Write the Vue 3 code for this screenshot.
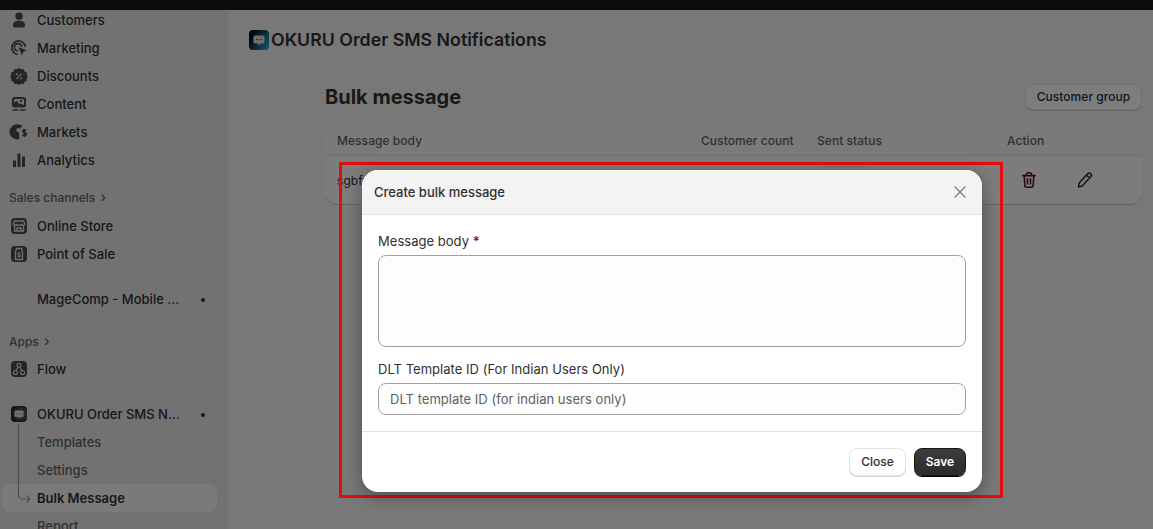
<script setup>
const icons = {
  customers: { fill: 'M10 2.500a3.700 3.700 0 1 1 0 7.400 3.700 3.700 0 0 1 0-7.400ZM4 15c0-3 2.600-4.300 6-4.300s6 1.300 6 4.300v1a1.400 1.400 0 0 1-1.400 1.400H5.400A1.400 1.400 0 0 1 4 16v-1Z' },
  marketing: { stroke: 'M8.600 16.400a6.800 6.800 0 1 1 7.800-7.500M8.800 12.800a3.600 3.600 0 1 1 3.800-3.700', fill: 'M9.400 9.200l8.400 3-3.400 1.500-1.500 3.700-3.500-8.200Z' },
  discounts: { fill: 'M10 2l2.100 1.300 2.500-.2 1 2.300 2.300 1-.2 2.500L19 10.500l-1.300 2.100.2 2.100-2.300 1-1 2.200-2.500-.2L10 19l-2.100-1.300-2.500.2-1-2.200-2.300-1 .2-2.100L1 10.500l1.300-1.600-.2-2.500 2.300-1 1-2.300 2.500.2L10 2Zm-2.100 5.200a1 1 0 1 0 0 2 1 1 0 0 0 0-2Zm4.200 4a1 1 0 1 0 0 2 1 1 0 0 0 0-2ZM12.200 7.300 7 12.800l.8.700L13 8l-.8-.7Z' },
  content: { fill: 'M5.500 3h9A2.500 2.500 0 0 1 17 5.500v5.500a2.500 2.500 0 0 1-2.500 2.500h-9A2.500 2.500 0 0 1 3 11V5.500A2.500 2.500 0 0 1 5.500 3Zm.5 2a1 1 0 0 0-1 1v2.800L7.500 6.800 11 10.500l1-1 2.500 1.500a.500.500 0 0 0 .5-.500V6a1 1 0 0 0-1-1H6Zm6 .800a1.200 1.200 0 1 1 0 2.400 1.200 1.200 0 0 1 0-2.400ZM3.500 15.200h5.800v1.500H3.500v-1.500Zm7.200 0h5.800v1.500h-5.800v-1.500Z' },
  markets: { fill: 'M9.500 2.500a7.500 7.500 0 0 1 4 1.100L11 6.500 8.500 6 7 8l2 2.500 1-.5v2.500l.5 4.400a7.500 7.500 0 1 1-1-14.400Z', stroke: 'M17 8.500c-.5-.8-3.300-1-3.300.7 0 1.800 3.600 1 3.600 2.900 0 1.700-3 1.600-3.800.6M15.400 7v8' },
  analytics: { fill: 'M4.500 10.500h2A.500.500 0 0 1 7 11v6H4v-6a.500.500 0 0 1 .5-.5ZM9 3.500h2a.500.500 0 0 1 .5.500v13h-3V4a.500.500 0 0 1 .5-.5Zm4.500 3h2a.500.500 0 0 1 .5.500v10h-3V7a.500.500 0 0 1 .5-.5Z' },
  store: 'M5.500 9.500v5.500h9V9.500M5.500 5h9l1.300 3c-.5 1.800-2.900 1.800-3.300 0-.4 1.800-4.600 1.800-5 0-.4 1.800-2.800 1.800-3.300 0L5.500 5ZM8 15v-3h4v3',
  pos: 'M6.500 8l1-3.500h5l1 3.500v7.500h-7V8ZM11.300 9.300c-.5-.6-2.300-.6-2.300.6 0 1.300 2.400.7 2.400 2 0 1.200-2 1.100-2.600.5',
  flow: 'M12 6.300a2 2 0 1 1-4 0 2 2 0 0 1 4 0ZM8.400 13.500a2 2 0 1 1-4 0 2 2 0 0 1 4 0ZM15.600 13.500a2 2 0 1 1-4 0 2 2 0 0 1 4 0ZM9 8l-2 3.700M11 8l2 3.700',
}

const nav = [
  { label: 'Customers', icon: 'customers' },
  { label: 'Marketing', icon: 'marketing' },
  { label: 'Discounts', icon: 'discounts' },
  { label: 'Content', icon: 'content' },
  { label: 'Markets', icon: 'markets' },
  { label: 'Analytics', icon: 'analytics' },
]
const channels = [
  { label: 'Online Store', icon: 'store' },
  { label: 'Point of Sale', icon: 'pos' },
]
const subLinks = ['Templates', 'Settings']
</script>

<template>
  <div class="screen">
    <div class="topbar"></div>
    <div class="shell">
      <aside class="sidebar">
        <div class="nav-list">
          <a v-for="item in nav" :key="item.label" class="nav-row">
            <span class="nav-icon">
              <svg viewBox="0 0 20 20" width="20" height="20">
                <path v-if="icons[item.icon].fill" :d="icons[item.icon].fill" fill="#4a4a4a" fill-rule="evenodd" />
                <path v-if="icons[item.icon].stroke" :d="icons[item.icon].stroke" fill="none" stroke="#4a4a4a" stroke-width="1.700" />
              </svg>
            </span>
            <span class="nav-label">{{ item.label }}</span>
          </a>
        </div>

        <div class="section-title section-channels">Sales channels <span class="chev">›</span></div>
        <a v-for="item in channels" :key="item.label" class="nav-row">
          <span class="nav-icon">
            <svg viewBox="0 0 20 20" width="20" height="20">
              <rect x="2" y="2" width="16" height="16" rx="4" fill="#4a4a4a" />
              <path :d="icons[item.icon]" fill="none" stroke="#e0e0e0" stroke-width="1.300" />
            </svg>
          </span>
          <span class="nav-label">{{ item.label }}</span>
        </a>

        <div class="rule rule-one"></div>
        <a class="nav-row">
          <span class="nav-icon"></span>
          <span class="nav-label">MageComp - Mobile ...</span>
          <span class="dot"></span>
        </a>

        <div class="section-title section-apps">Apps <span class="chev">›</span></div>
        <a class="nav-row">
          <span class="nav-icon">
            <svg viewBox="0 0 20 20" width="20" height="20">
              <rect x="2" y="2" width="16" height="16" rx="4" fill="#4a4a4a" />
              <path :d="icons.flow" fill="none" stroke="#e8e8e8" stroke-width="1.100" />
            </svg>
          </span>
          <span class="nav-label">Flow</span>
        </a>
        <div class="rule rule-two"></div>

        <div class="app-group">
          <a class="nav-row">
            <span class="nav-icon">
              <svg viewBox="0 0 20 20" width="20" height="20">
                <defs>
                  <radialGradient id="navLogo" cx="0.600" cy="0.500" r="0.700">
                    <stop offset="0" stop-color="#7a7a7a" />
                    <stop offset="1" stop-color="#161616" />
                  </radialGradient>
                </defs>
                <rect x="2" y="2" width="16" height="16" rx="4" fill="url(#navLogo)" />
                <path d="M6.500 6.500h7a1 1 0 0 1 1 1v4.500a1 1 0 0 1-1 1h-2.500L10 14.500 9 13H6.500a1 1 0 0 1-1-1V7.500a1 1 0 0 1 1-1Z" fill="#e4e4e4" />
                <path d="M7.500 10h5" stroke="#666" stroke-width="1" stroke-dasharray="1 1" />
              </svg>
            </span>
            <span class="nav-label">OKURU Order SMS N...</span>
            <span class="dot"></span>
          </a>
          <a v-for="link in subLinks" :key="link" class="nav-row sub-row">
            <span class="nav-icon"></span>
            <span class="nav-label">{{ link }}</span>
          </a>
          <a class="nav-row sub-row active-row">
            <span class="nav-icon"></span>
            <span class="nav-label">Bulk Message</span>
          </a>
          <a class="nav-row sub-row">
            <span class="nav-icon"></span>
            <span class="nav-label">Report</span>
          </a>
          <svg class="tree" width="24" height="84" viewBox="0 0 24 84">
            <path d="M9.500 0V71a4 4 0 0 0 4 4H21M17.500 71.500 21 75l-3.500 3.500" fill="none" stroke="#9a9a9a" stroke-width="1.200" />
          </svg>
        </div>
      </aside>

      <main class="main">
        <header class="app-title">
          <svg viewBox="0 0 20 20" width="20" height="20" class="app-logo">
            <defs>
              <linearGradient id="logoGrad" x1="0" y1="0" x2="1" y2="0.600">
                <stop offset="0.250" stop-color="#0a1216" />
                <stop offset="1" stop-color="#1a9cc0" />
              </linearGradient>
            </defs>
            <rect width="20" height="20" rx="4" fill="url(#logoGrad)" />
            <path d="M6 5.500h8A1.500 1.500 0 0 1 15.500 7v5a1.500 1.500 0 0 1-1.500 1.500h-2.500L10 15.500l-1.500-2H6A1.500 1.500 0 0 1 4.500 12V7A1.500 1.500 0 0 1 6 5.500Z" fill="#dcdcdc" />
            <path d="M7 9.500h6" stroke="#555" stroke-width="1.200" stroke-dasharray="1.200 1.200" />
          </svg>
          <h1>OKURU Order SMS Notifications</h1>
        </header>

        <section class="content">
          <div class="content-head">
            <h2>Bulk message</h2>
            <button class="ghost-btn">Customer group</button>
          </div>

          <div class="table-card">
            <div class="table-row table-head">
              <span>Message body</span>
              <span>Customer count</span>
              <span>Sent status</span>
              <span>Action</span>
            </div>
            <div class="table-row table-body">
              <span>sgbfdg</span>
              <span>12</span>
              <span><i class="badge">Sent</i></span>
              <span class="actions">
                <svg viewBox="0 0 20 20" width="20" height="20">
                  <path d="M3.800 5.600h12.400M7.500 5.600V4.300A1.500 1.500 0 0 1 9 2.800h2a1.500 1.500 0 0 1 1.500 1.500v1.300M5.200 5.600l.6 10a1.800 1.800 0 0 0 1.800 1.700h4.800a1.800 1.800 0 0 0 1.800-1.700l.6-10M8.500 8.700v5.200M11.500 8.700v5.200" fill="none" stroke="#5e0f1e" stroke-width="1.600" stroke-linecap="round" />
                </svg>
                <svg viewBox="0 0 20 20" width="20" height="20">
                  <path d="M3.500 17l.6-4 8.600-9.300a2 2 0 0 1 2.900 0l.2.200a2 2 0 0 1 0 2.800l-8.600 9.300-3.700 1ZM11.500 5.200l3.400 3.200" fill="none" stroke="#2a2a2a" stroke-width="1.500" stroke-linejoin="round" />
                </svg>
              </span>
            </div>
          </div>
        </section>
      </main>
    </div>

    <div class="backdrop"></div>
    <div class="annotation"></div>

    <div class="modal">
      <div class="modal-head">
        <h3>Create bulk message</h3>
        <svg viewBox="0 0 12 12" width="12" height="12" class="modal-x">
          <path d="M.5.500l11 11M11.500.500l-11 11" stroke="#7c7c7c" stroke-width="1.300" fill="none" />
        </svg>
      </div>
      <div class="modal-body">
        <label class="field-label">Message body <em>*</em></label>
        <div class="text-box text-area"></div>
        <label class="field-label second">DLT Template ID (For Indian Users Only)</label>
        <div class="text-box text-input">DLT template ID (for indian users only)</div>
      </div>
      <div class="modal-foot">
        <button class="btn-close">Close</button>
        <button class="btn-save">Save</button>
      </div>
    </div>
  </div>
</template>

<style>
html, body { margin: 0; overflow: hidden; }
</style>

<style scoped>
.screen {
  position: relative;
  width: 1153px;
  height: 529px;
  overflow: hidden;
  background: #f1f1f1;
  color: #303030;
  font-family: Inter, "Liberation Sans", sans-serif;
  font-size: 13px;
}
.topbar { height: 10px; background: #1a1a1a; }
.shell { display: flex; height: 519px; }

.sidebar {
  flex: 0 0 228px;
  box-sizing: border-box;
  height: 519px;
  overflow: hidden;
  background: #e5e5e5;
}
.nav-list { margin-top: -4px; }
.nav-row {
  position: relative;
  display: flex;
  align-items: center;
  gap: 8px;
  height: 28px;
  padding-left: 9px;
  font-weight: 450;
  color: #303030;
}
.nav-icon { flex: 0 0 20px; height: 20px; display: flex; }
.nav-label { white-space: nowrap; }
.dot {
  position: absolute;
  left: 201px;
  top: 13px;
  width: 4px;
  height: 4px;
  border-radius: 50%;
  background: #303030;
}
.section-title {
  height: 20px;
  line-height: 20px;
  padding-left: 9px;
  font-size: 12px;
  font-weight: 450;
  color: #616161;
}
.section-channels { margin: 13px 0 5px; }
.section-apps { margin: 18px 0 4px; }
.chev { margin-left: 2px; font-size: 14px; }
.rule { height: 1px; margin: 8px; background: #dedede; }
.app-group { position: relative; }
.sub-row { color: #616161; }
.active-row {
  margin: 0 11px 0 2px;
  padding-left: 7px;
  border-radius: 8px;
  background: #f4f4f4;
  color: #303030;
  font-weight: 600;
}
.tree { position: absolute; left: 9px; top: 24px; }

.main { flex: 1; min-width: 0; padding: 20px 11px 0 21px; }
.app-title { display: flex; align-items: center; gap: 2px; height: 20px; }
.app-title h1 {
  margin: 0 0 2px;
  font-size: 17.75px;
  font-weight: 600;
  color: #303030;
  white-space: nowrap;
}
.app-logo { flex: none; }

.content { margin: 0 0 0 76px; padding-top: 34px; }
.content-head { display: flex; align-items: center; justify-content: space-between; height: 26px; }
.content-head h2 { margin: 0; font-size: 20px; font-weight: 700; color: #303030; }
.ghost-btn {
  height: 26px;
  width: 117px;
  padding: 0 0 2px;
  border: 0;
  border-radius: 8px;
  background: #fafafa;
  box-shadow: 0 1px 0 #c8c8c8, inset 0 0 0 1px #e3e3e3;
  font: 450 12px Inter, sans-serif;
  letter-spacing: 0.05px;
  color: #303030;
}
.table-card {
  margin-top: 17px;
  border-radius: 12px;
  overflow: hidden;
  background: #f9f9f9;
  box-shadow: 0 1px 0 #c8c8c8;
}
.table-row {
  display: grid;
  grid-template-columns: 364px 116px 190px 1fr;
  align-items: center;
  padding-left: 12px;
  font-size: 12px;
  font-weight: 450;
  letter-spacing: 0.05px;
}
.table-head {
  box-sizing: border-box;
  height: 29px;
  padding-bottom: 2px;
  background: #f5f5f5;
  border-bottom: 1px solid #e0e0e0;
  color: #616161;
}
.table-body { height: 48px; color: #303030; font-weight: 400; }
.badge {
  display: block;
  width: 52px;
  height: 28px;
  border-radius: 8px;
  border: 1px solid #e3e3e3;
  box-sizing: border-box;
  font-style: normal;
  text-align: center;
}
.actions { display: flex; gap: 36px; margin-left: 12px; }

.backdrop { position: absolute; inset: 0; background: rgba(0, 0, 0, 0.5); }
.annotation {
  position: absolute;
  left: 339px;
  top: 162px;
  width: 664px;
  height: 336px;
  box-sizing: border-box;
  border: 3px solid #e30b0b;
}

.modal {
  position: absolute;
  left: 362px;
  top: 170px;
  width: 620px;
  height: 322px;
  border-radius: 16px;
  overflow: hidden;
  background: #fff;
  box-shadow: 0 4px 16px rgba(0, 0, 0, 0.35);
  display: flex;
  flex-direction: column;
}
.modal-head {
  flex: 0 0 44px;
  display: flex;
  align-items: center;
  justify-content: space-between;
  padding: 0 16px 0 12px;
  background: #f3f3f3;
  border-bottom: 1px solid #e3e3e3;
}
.modal-head h3 { margin: 0; font-size: 13px; font-weight: 550; color: #303030; }
.modal-body { flex: 1; padding: 16px 16px 0; display: flex; flex-direction: column; }
.field-label {
  display: block;
  height: 20px;
  line-height: 20px;
  font-size: 13px;
  font-weight: 400;
  letter-spacing: 0.03px;
  color: #303030;
}
.field-label em { font-style: normal; color: #8e0b21; font-weight: 600; }
.field-label.second { margin-top: 12px; }
.text-box {
  box-sizing: border-box;
  border: 1px solid #a0a0a0;
  border-radius: 8px;
  background: #fdfdfd;
}
.text-area { height: 92px; margin-top: 4px; }
.text-input {
  height: 32px;
  margin-top: 4px;
  padding-left: 11px;
  line-height: 30px;
  font-size: 13px;
  letter-spacing: 0.03px;
  color: #616161;
}
.modal-foot {
  flex: 0 0 60px;
  display: flex;
  align-items: center;
  justify-content: flex-end;
  gap: 8px;
  padding: 0 16px;
  border-top: 1px solid #e3e3e3;
}
.btn-close, .btn-save {
  height: 28px;
  padding: 0 0 2px;
  border-radius: 8px;
  font: 450 12px Inter, sans-serif;
}
.btn-close {
  width: 57px;
  border: 1px solid #e3e3e3;
  background: #fff;
  color: #303030;
  box-shadow: 0 1px 0 #d4d4d4;
}
.btn-save {
  width: 52px;
  border: 1px solid #1a1a1a;
  background: linear-gradient(#3c3c3c, #2c2c2c);
  color: #fff;
  font-weight: 600;
  box-shadow: 0 1px 0 #000;
}
</style>
